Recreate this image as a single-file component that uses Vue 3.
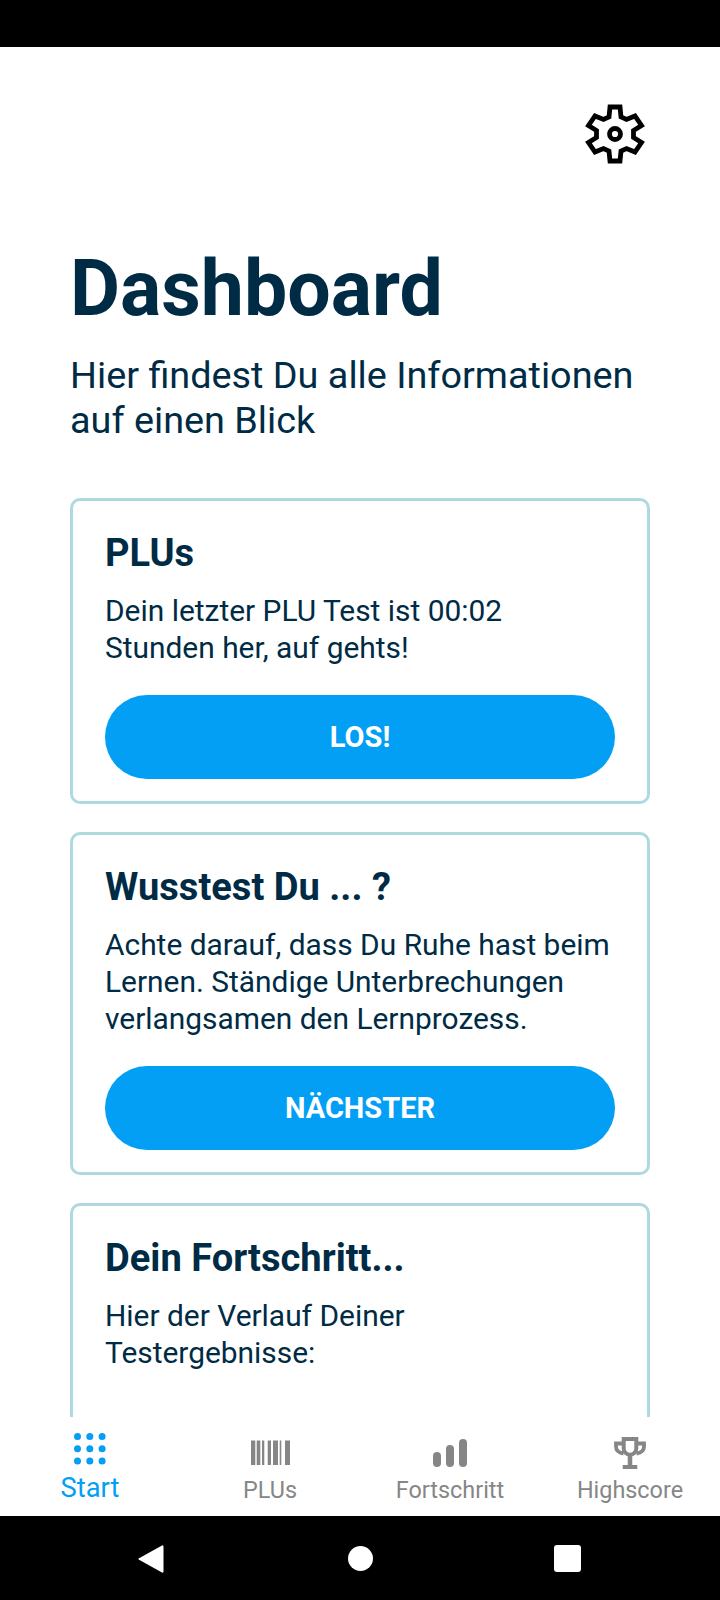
<script setup>
const tabs = [
  { label: 'Start', icon: 'grid', active: true },
  { label: 'PLUs', icon: 'barcode' },
  { label: 'Fortschritt', icon: 'bars' },
  { label: 'Highscore', icon: 'trophy' }
];

const dots = [];
for (const y of [0, 12.3, 24.6]) {
  for (const x of [0, 12.3, 24.6]) {
    dots.push({ x: x + 3.5, y: y + 3.5 });
  }
}

const stripes = [
  [0, 4.3], [5.7, 3.6], [11, 2.3], [16.7, 3.3], [22, 5], [28.7, 1.6], [34, 5]
];
</script>

<template>
  <div class="phone">
    <div class="status-bar"></div>

    <main class="content">
      <div class="top-row">
        <svg class="gear" viewBox="0 0 60 60" fill="none" stroke="#000" stroke-width="4.8" stroke-linejoin="miter">
          <path d="M25 3h10l1 10 5.500 2.500 8.500-3.500 6.500 9.500-8 5v7l8 5-6.500 9.500-8.500-3.500-5.500 2.500-1 10h-10l-1-10-5.500-2.500-8.500 3.500-6.500-9.500 8-5v-7l-8-5 6.500-9.500 8.500 3.500 5.500-2.500z" />
          <circle cx="30" cy="30" r="5.500" />
        </svg>
      </div>

      <h1 class="title">Dashboard</h1>
      <p class="subtitle">Hier findest Du alle Informationen auf einen Blick</p>

      <section class="card">
        <h2>PLUs</h2>
        <p>Dein letzter PLU Test ist 00:02<br />Stunden her, auf gehts!</p>
        <button class="action">LOS!</button>
      </section>

      <section class="card">
        <h2>Wusstest Du ... ?</h2>
        <p>Achte darauf, dass Du Ruhe hast beim Lernen. Ständige Unterbrechungen verlangsamen den Lernprozess.</p>
        <button class="action">NÄCHSTER</button>
      </section>

      <section class="card last">
        <h2>Dein Fortschritt...</h2>
        <p>Hier der Verlauf Deiner<br />Testergebnisse:</p>
      </section>
    </main>

    <nav class="tabs">
      <div v-for="tab in tabs" :key="tab.label" class="tab" :class="{ active: tab.active }">
        <svg v-if="tab.icon === 'grid'" class="tab-icon" width="32" height="32" viewBox="0 0 32 32" fill="#039ff5">
          <circle v-for="(d, i) in dots" :key="i" :cx="d.x" :cy="d.y" r="3.500" />
        </svg>
        <svg v-else-if="tab.icon === 'barcode'" class="tab-icon" width="39" height="32" viewBox="0 0 39 32" fill="#868686">
          <rect v-for="(s, i) in stripes" :key="i" :x="s[0]" y="3.500" :width="s[1]" height="24.500" />
        </svg>
        <svg v-else-if="tab.icon === 'bars'" class="tab-icon" width="34" height="32" viewBox="0 0 34 32" fill="#868686">
          <rect x="0" y="15" width="8" height="15" rx="4" />
          <rect x="13" y="8" width="8" height="22" rx="4" />
          <rect x="26" y="2" width="8" height="28" rx="4" />
        </svg>
        <svg v-else class="tab-icon" width="32" height="32" viewBox="0 0 32 32" fill="none" stroke="#868686">
          <path d="M9.700 2h12.600v9.500a6.300 6.300 0 0 1-12.600 0z" stroke-width="4" />
          <path d="M8 6.500H2v3c0 4 2.700 6.300 7.500 7M24 6.500h6v3c0 4-2.700 6.300-7.500 7" stroke-width="3.800" />
          <path d="M16 18v11" stroke-width="4.500" />
          <path d="M8.700 30h14.600" stroke-width="4" />
        </svg>
        <span class="tab-label">{{ tab.label }}</span>
      </div>
    </nav>

    <div class="android-bar">
      <svg width="26" height="30" viewBox="0 0 26 30" fill="#fff">
        <path d="M24 1.500a1 1 0 0 1 1.500 1v25a1 1 0 0 1-1.500 1L1.500 16a1 1 0 0 1 0-2z" />
      </svg>
      <span class="home"></span>
      <span class="recent"></span>
    </div>
  </div>
</template>

<style>
html,
body {
  margin: 0;
  background: #fff;
}
</style>

<style scoped>
.phone {
  width: 720px;
  height: 1600px;
  display: flex;
  flex-direction: column;
  font-family: Roboto, "Liberation Sans", sans-serif;
  color: #002b45;
  background: #fff;
  overflow: hidden;
}

.status-bar {
  height: 47px;
  flex: none;
  background: #000;
}

.content {
  flex: 1;
  min-height: 0;
  overflow: hidden;
  padding: 0 70px;
}

.top-row {
  display: flex;
  justify-content: flex-end;
  padding-top: 57px;
  padding-right: 5px;
}

.gear {
  width: 60px;
  height: 60px;
  display: block;
}

.title {
  margin: 81px 0 0;
  font-size: 77px;
  line-height: 88px;
  font-weight: 700;
}

.subtitle {
  margin: 20px 0 0;
  font-size: 37.800px;
  line-height: 45px;
  font-weight: 400;
}

.card {
  box-sizing: border-box;
  border: 3px solid #aedadf;
  border-radius: 10px;
  padding: 30px 32px 22px;
  margin-bottom: 28px;
}

.card:first-of-type {
  margin-top: 55px;
}

.card.last {
  min-height: 300px;
}

.card h2 {
  margin: 0;
  font-size: 38.100px;
  line-height: 44px;
  font-weight: 700;
}

.card p {
  margin: 17px 0 0;
  font-size: 29.900px;
  line-height: 37px;
}

.action {
  display: block;
  width: 100%;
  height: 84px;
  margin-top: 29px;
  border: none;
  border-radius: 42px;
  background: #039ff5;
  color: #fff;
  font-family: inherit;
  font-size: 29px;
  font-weight: 700;
}

.tabs {
  flex: none;
  height: 99px;
  display: grid;
  grid-template-columns: repeat(4, 180px);
  background: #fff;
}

.tab {
  display: flex;
  flex-direction: column;
  align-items: center;
  padding-top: 20px;
  color: #868686;
}

.tab.active {
  padding-top: 16px;
  color: #039ff5;
}

.tab-icon {
  display: block;
  flex: none;
}

.tab-label {
  margin-top: 7px;
  font-size: 23.400px;
  line-height: 28px;
}

.tab.active .tab-label {
  font-size: 27.300px;
  margin-top: 9px;
}

.android-bar {
  flex: none;
  height: 84px;
  background: #000;
  display: flex;
  align-items: center;
  position: relative;
}

.android-bar svg {
  position: absolute;
  left: 138px;
  top: 28px;
}

.home {
  position: absolute;
  left: 348px;
  top: 30px;
  width: 25px;
  height: 25px;
  border-radius: 50%;
  background: #fff;
}

.recent {
  position: absolute;
  left: 554px;
  top: 29px;
  width: 27px;
  height: 27px;
  border-radius: 3px;
  background: #fff;
}
</style>
